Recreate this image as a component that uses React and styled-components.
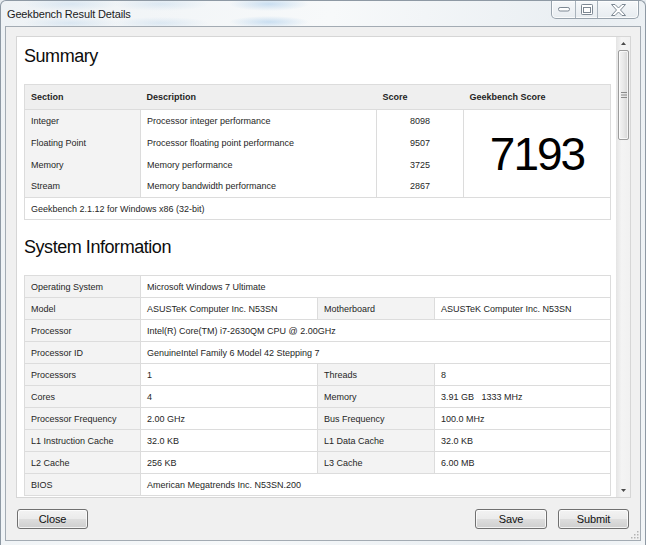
import React from 'react';
import styled, { createGlobalStyle } from 'styled-components';

const GlobalStyle = createGlobalStyle`
  html, body { margin: 0; padding: 0; background: #e6ebef; }
  body { font-family: "Liberation Sans", Arial, sans-serif; }
  #root { width: 646px; height: 545px; }
  * { box-sizing: border-box; }
`;

const Window = styled.div`
  position: relative;
  width: 646px;
  height: 545px;
  display: flex;
  flex-direction: column;
  border: 1px solid #8e99a4;
  border-bottom: none;
  border-radius: 6px 6px 0 0;
  background:
    radial-gradient(48px 7px at 70px 3px, rgba(140, 185, 225, 0.22), transparent),
    radial-gradient(48px 7px at 160px 3px, rgba(140, 185, 225, 0.22), transparent),
    radial-gradient(40px 7px at 268px 3px, rgba(120, 175, 225, 0.35), transparent),
    radial-gradient(48px 6px at 70px 22px, rgba(140, 185, 225, 0.22), transparent),
    radial-gradient(48px 6px at 160px 22px, rgba(140, 185, 225, 0.22), transparent),
    radial-gradient(40px 6px at 268px 21px, rgba(120, 175, 225, 0.35), transparent),
    linear-gradient(100deg, #eef2f5 0%, #f7f9fa 45%, #e9eef2 80%, #f2f5f7 100%);
  overflow: hidden;
`;

const TitleBar = styled.div`
  height: 25px;
  display: flex;
  align-items: flex-start;
  flex-shrink: 0;
`;

const Title = styled.div`
  height: 25px;
  display: flex;
  align-items: center;
  padding-left: 6px;
  font-size: 11px;
  letter-spacing: -0.15px;
  color: #1b1b1b;
`;

const Controls = styled.div`
  margin-left: auto;
  margin-right: 6px;
  height: 18px;
  display: flex;
  border: 1px solid #98a3ad;
  border-top: none;
  border-radius: 0 0 5px 5px;
  background: linear-gradient(#f6f8fa, #e7ecf0);
  box-shadow: inset 0 0 0 1px rgba(255, 255, 255, 0.8);
  overflow: hidden;
`;

const ControlButton = styled.div`
  width: ${(p) => p.$w}px;
  height: 100%;
  display: flex;
  align-items: center;
  justify-content: center;
  border-left: ${(p) => (p.$first ? 'none' : '1px solid #a9b3bc')};
`;

const Client = styled.div`
  position: relative;
  flex: 1;
  margin: 0 4px 4px 4px;
  border: 1px solid #a3abb3;
  background: #f0f0f0;
  display: flex;
  flex-direction: column;
  padding: 9px 9px 11px 10px;
`;

const Panel = styled.div`
  height: 462px;
  flex-shrink: 0;
  display: flex;
  border: 1px solid #d6d6d6;
  background: #ffffff;
`;

const Content = styled.div`
  flex: 1;
  overflow: hidden;
  padding: 9px 5px 0 7px;
  background: #ffffff;
`;

const Heading = styled.h2`
  margin: 0 0 18px 0;
  height: 20px;
  line-height: 20px;
  font-size: 18px;
  font-weight: normal;
  letter-spacing: -0.45px;
  color: #0d0d0d;
  font-family: "Liberation Sans", Arial, sans-serif;
`;

const Section = styled.div`
  margin-bottom: ${(p) => p.$gap || 0}px;
`;

const Table = styled.table`
  width: 587px;
  border-collapse: collapse;
  table-layout: fixed;
  border: 1px solid #dcdcdc;
  font-size: 9px;
  color: #262626;
`;

const HeadCell = styled.th`
  height: 25px;
  padding: 0 6px;
  text-align: left;
  font-weight: bold;
  color: #1f1f1f;
  background: #efefef;
  border-bottom: 1px solid #dcdcdc;
`;

const Cell = styled.td`
  box-sizing: border-box;
  height: 22px;
  padding: 0 6px;
  text-align: ${(p) => p.$align || 'left'};
  background: ${(p) => (p.$label ? '#f3f3f3' : '#ffffff')};
  border-left: ${(p) => (p.$lined ? '1px solid #dcdcdc' : 'none')};
  border-right: ${(p) => (p.$lined ? '1px solid #dcdcdc' : 'none')};
  white-space: pre;
  overflow: hidden;
`;

const FootCell = styled.td`
  height: 22px;
  padding: 0 6px;
  border-top: 1px solid #dcdcdc;
  background: #fff;
`;

const BigScore = styled.td`
  padding: 0;
  text-align: center;
  vertical-align: middle;
  border-left: 1px solid #dcdcdc;
  font-size: 46px;
  letter-spacing: -2px;
  color: #000;
  background: #fff;
  line-height: 1;
`;

const SysCell = styled.td`
  box-sizing: border-box;
  height: 22px;
  padding: 0 6px;
  border: 1px solid #dcdcdc;
  background: ${(p) => (p.$label ? '#f3f3f3' : '#ffffff')};
  white-space: pre;
  overflow: hidden;
`;

const ScrollBar = styled.div`
  width: 14px;
  flex-shrink: 0;
  display: flex;
  flex-direction: column;
  align-items: center;
  background: linear-gradient(to right, #e4e4e4, #f4f4f4 40%, #f1f1f1);
`;

const ArrowBox = styled.div`
  width: 14px;
  height: 13px;
  flex-shrink: 0;
  display: flex;
  align-items: center;
  justify-content: center;
`;

const Thumb = styled.div`
  width: 11px;
  height: 90px;
  margin-left: 1px;
  border: 1px solid #9c9c9c;
  border-radius: 2px;
  background: linear-gradient(to right, #f4f4f4, #e8e8e8 50%, #d6d6d6);
  box-shadow: inset 0 0 0 1px rgba(255, 255, 255, 0.7);
  display: flex;
  align-items: center;
  justify-content: center;
`;

const Track = styled.div`
  flex: 1;
`;

const ButtonBar = styled.div`
  margin-top: 11px;
  height: 20px;
  display: flex;
  align-items: center;
  gap: 11px;
  padding: 0 2px 0 1px;
`;

const Button = styled.button`
  width: ${(p) => p.$w || 71}px;
  height: 20px;
  padding: 0;
  border: 1px solid #707070;
  border-radius: 3px;
  background: linear-gradient(#f3f3f3 0%, #ebebeb 48%, #dddddd 52%, #cfcfcf 100%);
  box-shadow: inset 0 0 0 1px rgba(255, 255, 255, 0.75);
  font-family: "Liberation Sans", Arial, sans-serif;
  font-size: 11px;
  letter-spacing: -0.1px;
  color: #111;
  margin-left: ${(p) => (p.$push ? 'auto' : '0')};
`;

const Grip = styled.svg`
  position: absolute;
  right: 1px;
  bottom: 1px;
`;

const summaryRows = [
  ['Integer', 'Processor integer performance', '8098'],
  ['Floating Point', 'Processor floating point performance', '9507'],
  ['Memory', 'Memory performance', '3725'],
  ['Stream', 'Memory bandwidth performance', '2867'],
];

const sysRows = [
  { label: 'Operating System', value: 'Microsoft Windows 7 Ultimate' },
  { label: 'Model', value: 'ASUSTeK Computer Inc. N53SN', label2: 'Motherboard', value2: 'ASUSTeK Computer Inc. N53SN' },
  { label: 'Processor', value: 'Intel(R) Core(TM) i7-2630QM CPU @ 2.00GHz' },
  { label: 'Processor ID', value: 'GenuineIntel Family 6 Model 42 Stepping 7' },
  { label: 'Processors', value: '1', label2: 'Threads', value2: '8' },
  { label: 'Cores', value: '4', label2: 'Memory', value2: '3.91 GB   1333 MHz' },
  { label: 'Processor Frequency', value: '2.00 GHz', label2: 'Bus Frequency', value2: '100.0 MHz' },
  { label: 'L1 Instruction Cache', value: '32.0 KB', label2: 'L1 Data Cache', value2: '32.0 KB' },
  { label: 'L2 Cache', value: '256 KB', label2: 'L3 Cache', value2: '6.00 MB' },
  { label: 'BIOS', value: 'American Megatrends Inc. N53SN.200' },
];

const glyphStroke = '#7d8893';

function MinGlyph() {
  return (
    <svg width="12" height="5" viewBox="0 0 12 5">
      <rect x="0.5" y="0.5" width="11" height="3.5" rx="1.6" fill="#fff" stroke={glyphStroke} />
    </svg>
  );
}

function MaxGlyph() {
  return (
    <svg width="12" height="11" viewBox="0 0 12 11">
      <rect x="0.5" y="0.5" width="11" height="10" rx="0.8" fill="#fff" stroke={glyphStroke} />
      <rect x="2.5" y="3.5" width="7" height="5" fill="none" stroke={glyphStroke} />
    </svg>
  );
}

function CloseGlyph() {
  return (
    <svg width="15" height="12" viewBox="0 0 15 12">
      <polygon
        points="0.5,0.5 4,0.5 7.5,4 11,0.5 14.5,0.5 9.5,6 14.5,11.5 11,11.5 7.5,8 4,11.5 0.5,11.5 5.5,6"
        fill="#fff"
        stroke={glyphStroke}
        strokeLinejoin="round"
      />
    </svg>
  );
}

export default function App() {
  return (
    <>
      <GlobalStyle />
      <Window>
        <TitleBar>
          <Title>Geekbench Result Details</Title>
          <Controls>
            <ControlButton $w={23} $first>
              <MinGlyph />
            </ControlButton>
            <ControlButton $w={22}>
              <MaxGlyph />
            </ControlButton>
            <ControlButton $w={41}>
              <CloseGlyph />
            </ControlButton>
          </Controls>
        </TitleBar>
        <Client>
          <Panel>
            <Content>
              <Section $gap={17}>
                <Heading>Summary</Heading>
                <Table>
                  <colgroup>
                    <col style={{ width: 116 }} />
                    <col style={{ width: 236 }} />
                    <col style={{ width: 87 }} />
                    <col style={{ width: 147 }} />
                  </colgroup>
                  <thead>
                    <tr>
                      <HeadCell>Section</HeadCell>
                      <HeadCell>Description</HeadCell>
                      <HeadCell>Score</HeadCell>
                      <HeadCell>Geekbench Score</HeadCell>
                    </tr>
                  </thead>
                  <tbody>
                    {summaryRows.map(([name, desc, score], i) => (
                      <tr key={name}>
                        <Cell $label>{name}</Cell>
                        <Cell $lined>{desc}</Cell>
                        <Cell $lined $align="center">{score}</Cell>
                        {i === 0 && <BigScore rowSpan={4}>7193</BigScore>}
                      </tr>
                    ))}
                    <tr>
                      <FootCell colSpan={4}>Geekbench 2.1.12 for Windows x86 (32-bit)</FootCell>
                    </tr>
                  </tbody>
                </Table>
              </Section>
              <Section>
                <Heading>System Information</Heading>
                <Table>
                  <colgroup>
                    <col style={{ width: 116 }} />
                    <col style={{ width: 177 }} />
                    <col style={{ width: 117 }} />
                    <col style={{ width: 176 }} />
                  </colgroup>
                  <tbody>
                    {sysRows.map((r) => (
                      <tr key={r.label}>
                        <SysCell $label>{r.label}</SysCell>
                        {r.label2 ? (
                          <>
                            <SysCell>{r.value}</SysCell>
                            <SysCell $label>{r.label2}</SysCell>
                            <SysCell>{r.value2}</SysCell>
                          </>
                        ) : (
                          <SysCell colSpan={3}>{r.value}</SysCell>
                        )}
                      </tr>
                    ))}
                  </tbody>
                </Table>
              </Section>
            </Content>
            <ScrollBar>
              <ArrowBox>
                <svg width="5" height="3" viewBox="0 0 5 3">
                  <polygon points="2.5,0 5,3 0,3" fill="#4a4a4a" />
                </svg>
              </ArrowBox>
              <Thumb>
                <svg width="6" height="6" viewBox="0 0 6 6">
                  <rect x="0" y="0" width="6" height="1" fill="#8a8a8a" />
                  <rect x="0" y="2.5" width="6" height="1" fill="#8a8a8a" />
                  <rect x="0" y="5" width="6" height="1" fill="#8a8a8a" />
                </svg>
              </Thumb>
              <Track />
              <ArrowBox>
                <svg width="5" height="3" viewBox="0 0 5 3">
                  <polygon points="0,0 5,0 2.5,3" fill="#4a4a4a" />
                </svg>
              </ArrowBox>
            </ScrollBar>
          </Panel>
          <ButtonBar>
            <Button>Close</Button>
            <Button $push $w={72}>Save</Button>
            <Button>Submit</Button>
          </ButtonBar>
          <Grip width="9" height="9" viewBox="0 0 9 9">
            {[[7, 1], [7, 4], [4, 4], [7, 7], [4, 7], [1, 7]].map(([x, y]) => (
              <rect key={`${x}-${y}`} x={x} y={y} width="1.5" height="1.5" fill="#b3b3b3" />
            ))}
          </Grip>
        </Client>
      </Window>
    </>
  );
}
